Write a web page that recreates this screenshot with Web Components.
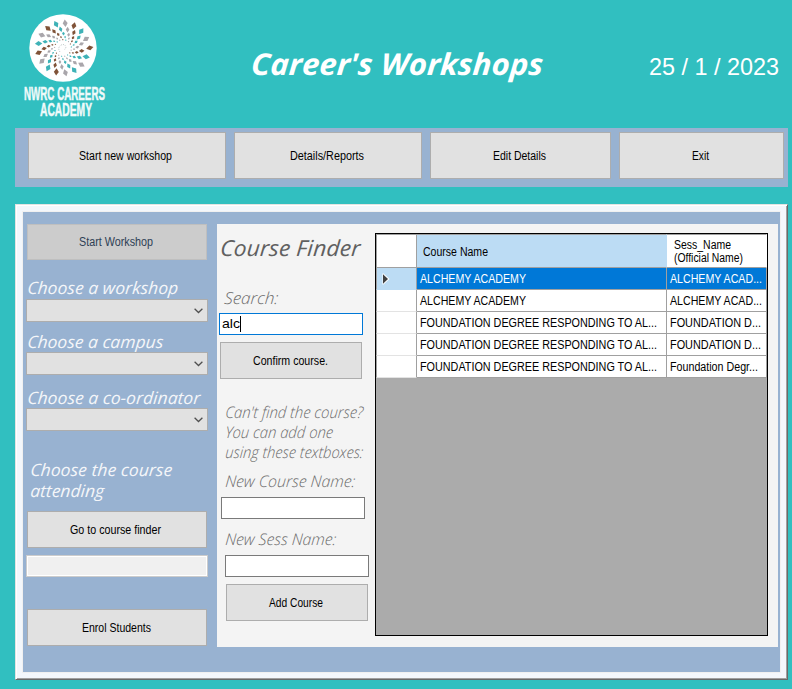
<!DOCTYPE html>
<html lang="en">
<head>
<meta charset="utf-8">
<title>Career's Workshops</title>
<style>
html,body{margin:0;padding:0;background:#31bfc0;overflow:hidden}
body{width:792px;height:689px}
</style>
</head>
<body>
<workshop-app></workshop-app>
<script>
const define = (name, html, setup) => customElements.define(name, class extends HTMLElement {
  connectedCallback() {
    if (this.shadowRoot) return;
    this.attachShadow({mode: 'open'}).innerHTML = html;
    if (setup) setup(this, this.shadowRoot);
  }
});

/* One line of text set on a baseline: x = left inset, b = baseline from top, w = line width, s = font size */
define('ui-text', `<style>
:host{display:block;flex:none;height:0;font:12.5px "Liberation Sans",sans-serif;color:#000;box-sizing:border-box;text-align:left}
:host([face=ui]){font-family:"Open Sans",sans-serif;font-style:italic}
span{display:inline-block;white-space:pre;line-height:14px;height:14px;transform-origin:0 12px;vertical-align:top}
</style><span><slot></slot></span>`, (el, root) => {
  const n = k => parseFloat(el.getAttribute(k) || 0), span = root.querySelector('span');
  const size = n('s') || 12.5;
  el.style.fontSize = size + 'px';
  el.style.paddingLeft = n('x') + 'px';
  if (n('wt')) el.style.fontWeight = n('wt');
  if (n('h')) el.style.height = n('h') + 'px';
  const ui = el.getAttribute('face') === 'ui', k = ui ? 0.388 : 0.3465;
  const y = Math.round(n('b') - 7 - k * size);
  const sx = n('w') ? n('w') / span.getBoundingClientRect().width : 1;
  span.style.transform = `translateY(${y}px) ${ui ? 'skewX(-4deg) ' : ''}scaleX(${sx})`;
});

define('ui-button', `<style>
:host{display:block;flex:none;box-sizing:border-box;height:37px;background:#e1e1e1;border:1px solid #adadad}
:host([disabled]){background:#ccc;border-color:#bfbfbf;height:36px}
</style><slot></slot>`);

define('ui-field', `<style>
:host{display:block;flex:none;box-sizing:border-box;width:144px;height:22px;background:#fff;border:1px solid #7a7a7a}
:host([focused]){border-color:#0078d7}
:host([readonly]){width:182px;background:#f0f0f0;border-color:#ccc;box-shadow:inset 0 0 0 1px #fff}
div{display:flex}
i{display:none;width:1px;height:16px;background:#000;margin-top:2px}
:host([focused]) i{display:block}
</style><div><slot></slot><i></i></div>`);

define('ui-combo', `<style>
:host{display:flex;flex:none;box-sizing:border-box;width:182px;height:23px;background:#e1e1e1;border:1px solid #adadad;justify-content:flex-end;align-items:center;padding-right:4px}
svg{display:block}
</style><svg width="9" height="6" viewBox="0 0 9 6"><path d="M.6.8 4.5 4.5 8.4.8" fill="none" stroke="#505050" stroke-width="1.3"/></svg>`);

define('academy-logo', `<style>
:host{display:block;width:98px;height:115px;flex:none}
svg{display:block;width:70px;height:70px;margin:0 0 0 14px}
ui-text{color:#effafa;-webkit-text-stroke:.5px #effafa}
</style><svg viewBox="-35 -35 70 70"></svg>
<ui-text s="18" wt="700" x="9.5" b="17" h="16" w="81">NWRC CAREERS</ui-text>
<ui-text s="18" wt="700" x="25.5" b="17" w="52">ACADEMY</ui-text>`, (el, root) => {
  const hue = {g: '#a9a6ab', b: '#805338', t: '#3fb2b7'}, arms = 'gbtgbtgtgbtgbtgbt';
  let out = '<circle r="33.7" fill="#fff"/>';
  [[24.8, 3.7, 2.5], [18.9, 2.8, 1.8], [14.4, 2, 1.4], [11.1, 1.3, .9], [8.4, .8, .7]].forEach(([r, h, w], ring) => {
    [...arms].forEach((c, i) => {
      const a = 5 + i * 360 / 17 + ring * 9;
      const rr = r + (ring === 0 && i === 4 ? 2 : 0);
      out += `<path transform="rotate(${a}) translate(0 ${-rr}) rotate(-12)" d="M0 ${-h}L${w} 0 0 ${h} ${-w} 0Z" fill="${hue[c]}"/>`;
    });
  });
  out += '<path d="M-3 4C-6 0-3-4 1-3.4 4-2 3 1.5 1 1.4" fill="none" stroke="#a9b6b6" stroke-width=".7" stroke-dasharray="1 1"/>';
  root.querySelector('svg').innerHTML = out;
});

define('page-header', `<style>
:host{display:flex;height:128px;box-sizing:border-box;padding:13px 0 0 14px}
ui-text{color:#fff}
</style><academy-logo></academy-logo>
<ui-text face="ui" s="30" wt="700" x="139" b="62.5" w="292">Career's Workshops</ui-text>
<ui-text s="24" x="107" b="62" w="130" style="margin-left:11px">25 / 1 / 2023</ui-text>`);

define('menu-bar', `<style>
:host{display:flex;gap:8px;box-sizing:border-box;width:773px;height:59px;margin-left:15px;padding:4px 0 0 13px;background:#98b2d1}
ui-button{height:47px}
</style>
<ui-button style="width:198px"><ui-text x="50" b="27" w="93">Start new workshop</ui-text></ui-button>
<ui-button style="width:188px"><ui-text x="55" b="27" w="74">Details/Reports</ui-text></ui-button>
<ui-button style="width:181px"><ui-text x="62" b="27" w="53">Edit Details</ui-text></ui-button>
<ui-button style="width:165px"><ui-text x="72" b="27" w="17">Exit</ui-text></ui-button>`);

define('step-panel', `<style>
:host{display:flex;flex-direction:column;width:194px;box-sizing:border-box;padding:12px 0 0 3px}
ui-text{color:#f4f6f9}
ui-button{width:180px;margin-left:1px}
ui-button ui-text{color:#000}
ui-button[disabled] ui-text{color:#2e3f55}
</style>
<ui-button disabled><ui-text x="51" b="21" w="74">Start Workshop</ui-text></ui-button>
<ui-text face="ui" s="17" x="1" b="35" h="39" w="151">Choose a workshop</ui-text><ui-combo></ui-combo>
<ui-text face="ui" s="17" x="1" b="27" h="30" w="136">Choose a campus</ui-text><ui-combo></ui-combo>
<ui-text face="ui" s="17" x="1" b="30" h="33" w="173">Choose a co-ordinator</ui-text><ui-combo></ui-combo>
<ui-text face="ui" s="17" x="4" b="46" h="45" w="142">Choose the course</ui-text>
<ui-text face="ui" s="17" x="4" b="22" h="35" w="74">attending</ui-text>
<ui-button><ui-text x="42" b="22" w="91">Go to course finder</ui-text></ui-button>
<ui-field readonly style="margin-top:7px"></ui-field>
<ui-button style="margin-top:32px"><ui-text x="54" b="22" w="69">Enrol Students</ui-text></ui-button>`);

define('course-finder', `<style>
:host{display:flex;flex-direction:column;width:158px;box-sizing:border-box}
ui-text{color:#6c6c6c}
ui-button{width:142px}
ui-button ui-text,ui-field ui-text{color:#000}
ui-field ui-text{width:20px}
</style>
<ui-text face="ui" s="22" x="3" b="31.5" h="60" w="140" style="color:#606060">Course Finder</ui-text>
<ui-text face="ui" s="16.5" wt="300" x="7" b="20.5" h="29" w="54">Search:</ui-text>
<ui-field focused style="margin-left:2px"><ui-text s="13.5" x="2" b="15" w="18">alc</ui-text></ui-field>
<ui-button style="margin:7px 0 0 3px"><ui-text x="32" b="22" w="75">Confirm course.</ui-text></ui-button>
<ui-text face="ui" s="16" wt="300" x="8" b="39" h="39" w="138">Can't find the course?</ui-text>
<ui-text face="ui" s="16" wt="300" x="8" b="20" h="20" w="108">You can add one</ui-text>
<ui-text face="ui" s="16" wt="300" x="8" b="20" h="20" w="138">using these textboxes:</ui-text>
<ui-text face="ui" s="16" wt="300" x="8" b="29" h="39" w="130">New Course Name:</ui-text>
<ui-field style="margin-left:4px"></ui-field>
<ui-text face="ui" s="16" wt="300" x="8" b="26" h="36" w="111">New Sess Name:</ui-text>
<ui-field style="margin-left:8px"></ui-field>
<ui-button style="margin:7px 0 0 9px"><ui-text x="42" b="22" w="54">Add Course</ui-text></ui-button>`);

define('course-grid', `<style>
:host{display:block;box-sizing:border-box;width:393px;height:403px;margin-top:9px;border:1px solid #000;background:#ababab;flex:none}
.t{display:grid;grid-template-columns:41px 250px 100px;grid-template-rows:34px repeat(5,22px)}
.t>div{box-sizing:border-box;background:#fff;border-right:1px solid #a0a0a0;border-bottom:1px solid #a0a0a0;overflow:hidden}
.t>.r{border-left:1px solid #a0a0a0;border-bottom-color:#e3e3e3}
.t>.h{border-top:1px solid #a0a0a0;border-bottom-color:#a0a0a0}
.t>.k{background:#bcdcf4;border-bottom-color:#bcdcf4}
.t>.h.c{background:#bcdcf4}
.t>.h.c,.t>.h.e{border-right-color:#fff}
.t>.h.c{border-right-color:#bcdcf4}
.t>.s{background:#0078d7}
.s ui-text{color:#fff}
svg{display:block;margin:5px 0 0 5px}
</style><div class="t">
<div class="h r"></div>
<div class="h c"><ui-text x="6" b="21" w="65">Course Name</ui-text></div>
<div class="h e"><ui-text x="7" b="14" h="13" w="57">Sess_Name</ui-text><ui-text x="7" b="14" w="69">(Official Name)</ui-text></div>
</div>`, (el, root) => {
  const long = ['FOUNDATION DEGREE RESPONDING TO AL...', 237];
  const rows = [
    [['ALCHEMY ACADEMY', 106], ['ALCHEMY ACAD...', 92]],
    [['ALCHEMY ACADEMY', 106], ['ALCHEMY ACAD...', 92]],
    [long, ['FOUNDATION D...', 91]],
    [long, ['FOUNDATION D...', 91]],
    [long, ['Foundation Degr...', 88]]];
  root.querySelector('.t').insertAdjacentHTML('beforeend', rows.map((r, i) =>
    `<div class="r ${i ? '' : 'k'}">${i ? '' : '<svg width="8" height="12"><path d="M.5.5h1L7.5 6l-6 5.5h-1Z" fill="#fff"/><path d="M1 1.2 6 6 1 10.8Z" fill="#404040"/></svg>'}</div>` +
    r.map(([t, w]) => `<div class="${i ? '' : 's'}"><ui-text x="3" b="15" w="${w}">${t}</ui-text></div>`).join('')).join(''));
});

define('work-panel', `<style>
:host{display:block;box-sizing:border-box;width:773px;height:476px;margin:17px 0 0 15px;padding:6px;background:#f3f7fc;
border:1px solid;border-color:#e3e3e3 #696969 #696969 #e3e3e3;box-shadow:inset 1px 1px #fff,inset -1px -1px #a0a0a0}
.b{display:flex;width:757px;height:460px;margin:1px 0 0 1px;background:#98b2d1;box-shadow:0 0 0 1px #f0f0f0}
.f{display:flex;width:561px;height:423px;margin-top:12px;background:#f4f4f4}
</style><div class="b"><step-panel></step-panel><div class="f"><course-finder></course-finder><course-grid></course-grid></div></div>`);

define('workshop-app', `<style>:host{display:flex;flex-direction:column;width:792px;height:689px;background:#31bfc0}</style>
<page-header></page-header><menu-bar></menu-bar><work-panel></work-panel>`);
</script>
</body>
</html>
